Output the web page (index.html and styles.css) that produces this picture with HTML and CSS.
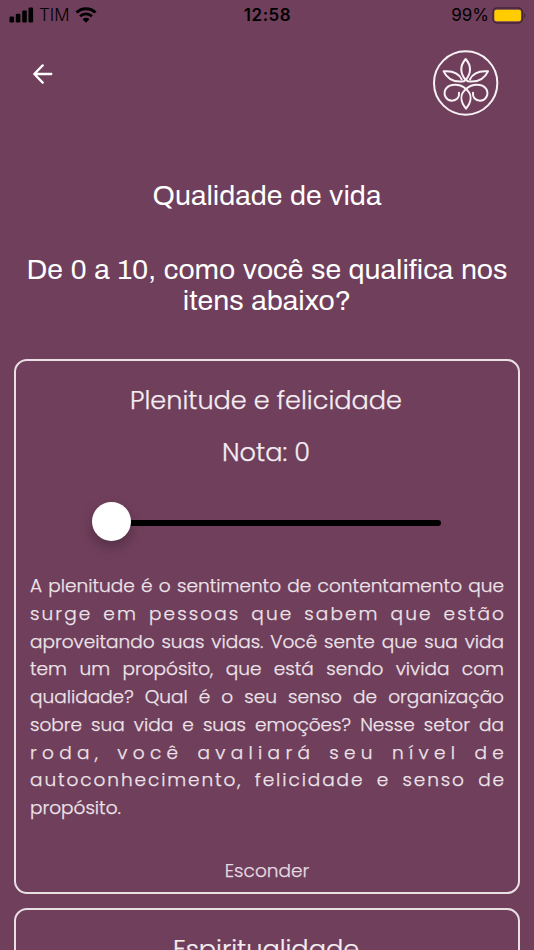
FILE: index.html
```
<!DOCTYPE html>
<html lang="pt-BR">
<head>
  <meta charset="utf-8">
  <meta name="viewport" content="width=device-width, initial-scale=1">
  <title>Qualidade de vida</title>
  <link rel="stylesheet" href="styles.css">
</head>
<body>
  <div class="status-bar">
    <div class="status-left">
      <svg class="signal" width="25" height="16" viewBox="0 0 25 16">
        <rect x="0.5" y="9.5" width="4.6" height="6" rx="1.2"/>
        <rect x="6.8" y="6.8" width="4.6" height="8.7" rx="1.2"/>
        <rect x="13.2" y="3.5" width="4.6" height="12" rx="1.2"/>
        <rect x="19.5" y="0.5" width="4.6" height="15" rx="1.2"/>
      </svg>
      <span class="carrier">TIM</span>
      <svg class="wifi" width="22" height="16" viewBox="0 0 22 16">
        <path d="M1.5 5.5a13.6 13.6 0 0 1 19 0" fill="none" stroke="#000" stroke-width="3"/>
        <path d="M5.1 9.2a8.4 8.4 0 0 1 11.8 0" fill="none" stroke="#000" stroke-width="2.8"/>
        <path d="M11 15.7l-3.4-3.5a4.8 4.8 0 0 1 6.8 0z"/>
      </svg>
    </div>
    <div class="clock">12:58</div>
    <div class="status-right">
      <span class="percent">99%</span>
      <svg class="battery" width="34" height="17" viewBox="0 0 34 17">
        <rect x="1" y="1" width="29.4" height="15" rx="4" fill="none" stroke="#452638" stroke-width="1.5"/>
        <rect x="2.3" y="2.7" width="26.8" height="11.6" rx="2.2" fill="#ffcc00"/>
        <path d="M32 6.2c1.8.7 1.8 3.9 0 4.6z" fill="#452638"/>
      </svg>
    </div>
  </div>

  <header class="top">
    <a class="back" href="#" aria-label="Voltar">
      <svg width="20" height="20" viewBox="0 0 20 20">
        <path d="M18.3 10H1.5M9.7 1.4L1.3 10l8.4 8.6"/>
      </svg>
    </a>
    <svg class="logo" width="84" height="84" viewBox="0 0 252 252">
      <circle cx="125" cy="123" r="95"/>
      <path d="M125 51C107 72 107 92 125 114C143 92 143 72 125 51Z"/>
      <path d="M113 112C103 91 82 86 59 88C70 111 88 122 119 118L126 113"/>
      <path d="M138 112C148 91 169 86 192 88C181 111 163 122 132 118L125 113"/>
      <path d="M126 141C108 156 108 178 126 200C144 178 144 156 126 141Z"/>
      <path d="M126 141C107 124 78 125 66 140C56 155 65 176 84 176C97 176 107 167 105 152"/>
      <path d="M126 141C145 124 174 125 186 140C196 155 187 176 168 176C155 176 145 167 147 152"/>
    </svg>
  </header>

  <main>
    <h1>Qualidade de vida</h1>
    <h2>De 0 a 10, como você se qualifica nos<br>itens abaixo?</h2>

    <section class="card">
      <h3 class="title">Plenitude e felicidade</h3>
      <p class="grade">Nota: 0</p>
      <div class="slider">
        <div class="track"></div>
        <div class="thumb"></div>
      </div>
      <p class="description">
        <span class="line">A plenitude é o sentimento de contentamento que</span>
        <span class="line loose">surge em pessoas que sabem que estão</span>
        <span class="line">aproveitando suas vidas. Você sente que sua vida</span>
        <span class="line">tem um propósito, que está sendo vivida com</span>
        <span class="line">qualidade? Qual é o seu senso de organização</span>
        <span class="line">sobre sua vida e suas emoções? Nesse setor da</span>
        <span class="line looser">roda, você avaliará seu nível de</span>
        <span class="line wide">autoconhecimento, felicidade e senso de</span>
        <span class="line last">propósito.</span>
      </p>
      <a class="toggle" href="#">Esconder</a>
    </section>

    <section class="card">
      <h3 class="title">Espiritualidade</h3>
    </section>
  </main>
</body>
</html>
```

FILE: styles.css
```
* {
  box-sizing: border-box;
}

body {
  margin: 0;
  height: 950px;
  overflow: hidden;
  background: #703f5c;
  color: #fff;
  font-family: Poppins, Inter, sans-serif;
}

/* Status bar */
.status-bar {
  display: grid;
  grid-template-columns: 1fr auto 1fr;
  align-items: center;
  height: 30px;
  padding: 0 8px 2px 9px;
  color: #000;
  font: 400 17px/30px Inter, sans-serif;
}

.status-left,
.status-right {
  display: flex;
  align-items: center;
  height: 28px;
}

.status-left {
  gap: 5px;
}

.carrier {
  font-weight: 300;
}

.status-right {
  justify-content: flex-end;
  gap: 3px;
}

.clock {
  font-weight: 600;
  letter-spacing: 0.5px;
}

/* Header */
.top {
  display: flex;
  justify-content: space-between;
  height: 128px;
  padding: 12px 26px 0 33px;
}

.back {
  height: 20px;
  margin-top: 22px;
}

.back svg {
  display: block;
}

.back path {
  fill: none;
  stroke: #fff;
  stroke-width: 2.3;
  stroke-linecap: round;
  stroke-linejoin: round;
}

.logo {
  fill: none;
  stroke: #f8f1f5;
  stroke-width: 6;
  stroke-linejoin: round;
  stroke-linecap: round;
}

/* Headings */
h1,
h2 {
  margin: 0;
  font: 375 28.4px/31px Archivo, "Liberation Sans", sans-serif;
  text-align: center;
  word-spacing: 1.6px;
}

h1 {
  padding-top: 22px;
}

h2 {
  margin-top: 43px;
  white-space: nowrap;
}

/* Cards */
.card {
  height: 535px;
  margin: 0 14px 14px;
  padding: 21px 14px 0;
  border: 2px solid #e9dfe5;
  border-radius: 13px;
  text-align: center;
  -webkit-text-stroke: 0.25px;
}

h2 + .card {
  margin-top: 43px;
}

.title,
.grade {
  margin: 0;
  padding-right: 2px;
  font-size: 25.6px;
  font-weight: 300;
  line-height: 36px;
  color: #f4edf1;
}

.grade {
  margin-top: 16px;
}

/* Slider */
.slider {
  position: relative;
  width: 349px;
  height: 39px;
  margin: 32px auto 0 62px;
  padding: 18px 0 0 19px;
}

.track {
  height: 6px;
  border-radius: 3px;
  background: #000;
}

.thumb {
  position: absolute;
  top: 0;
  left: 0;
  width: 39px;
  height: 39px;
  border-radius: 50%;
  background: #fff;
  box-shadow: 0 6px 13px rgba(0, 0, 0, 0.25);
}

/* Text */
.description {
  margin: 31px 0 0;
  font-size: 18.5px;
  font-weight: 300;
  line-height: 27.75px;
  color: #eee5ea;
}

.line {
  display: block;
  white-space: nowrap;
  text-align: justify;
  text-align-last: justify;
}

/* negative margins swallow the trailing letter-spacing */
.line.wide {
  margin-right: -2px;
  letter-spacing: 1.9px;
}

.line.loose {
  margin-right: -2px;
  letter-spacing: 2.1px;
}

.line.looser {
  margin-right: -5px;
  letter-spacing: 5.3px;
}

.line.last {
  text-align-last: left;
}

.toggle {
  display: block;
  margin-top: 35px;
  color: #e6dce2;
  font-size: 18.5px;
  font-weight: 300;
  line-height: 28px;
  text-decoration: none;
}
```
